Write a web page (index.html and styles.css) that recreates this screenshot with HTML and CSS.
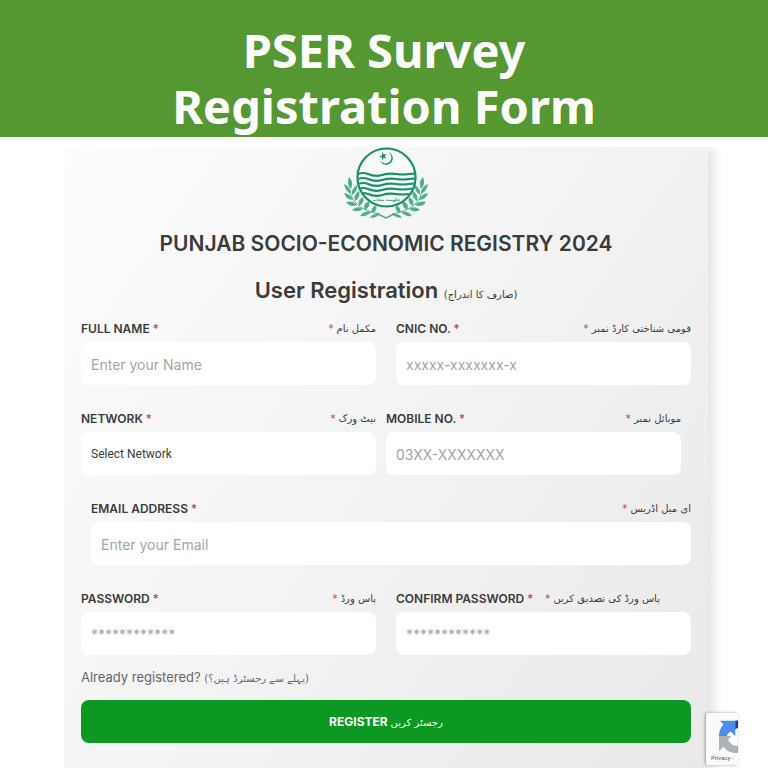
FILE: index.html
```html
<!DOCTYPE html>
<html lang="en">
<head>
<meta charset="utf-8">
<meta name="viewport" content="width=device-width, initial-scale=1">
<title>PSER Survey Registration Form</title>
<link rel="stylesheet" href="styles.css">
</head>
<body>
<header class="banner">
  <h1>PSER Survey<br>Registration Form</h1>
</header>
<main class="card">
  <svg class="emblem" viewBox="0 0 86 72" aria-hidden="true">
    <defs>
      <clipPath id="disc"><circle cx="43.5" cy="30.5" r="28"/></clipPath>
      <g id="wreath" fill="#4fae8e">
        <path d="M7 43Q9 62 37 67" fill="none" stroke="#4fae8e" stroke-width="1"/>
        <path d="M6 30Q11 35 8 42Q3 37 6 30Z"/>
        <path d="M1 37Q8 40 8 47Q2 44 1 37Z"/>
        <path d="M14 38Q15 44 9 48Q8 42 14 38Z"/>
        <path d="M1 46Q8 47 10 53Q3 53 1 46Z"/>
        <path d="M16 44Q18 50 12 54Q10 48 16 44Z"/>
        <path d="M3 55Q10 53 14 58Q7 61 3 55Z"/>
        <path d="M20 50Q22 56 16 59Q14 53 20 50Z"/>
        <path d="M9 63Q14 58 20 62Q15 66 9 63Z"/>
        <path d="M26 54Q28 60 22 63Q19 57 26 54Z"/>
        <path d="M17 69Q21 63 28 65Q24 70 17 69Z"/>
        <path d="M33 58Q35 64 29 66Q27 61 33 58Z"/>
        <path d="M27 71Q30 66 37 67Q33 71 27 71Z"/>
        <path d="M35 67L43 71" fill="none" stroke="#4fae8e" stroke-width="1.500"/>
      </g>
    </defs>
    <use href="#wreath"/>
    <use href="#wreath" transform="translate(86 0) scale(-1 1)"/>
    <circle cx="43.5" cy="30.5" r="29" fill="#f9fbfa" stroke="#18906a" stroke-width="2.2"/>
    <path d="M45 5a6.500 6.500 0 1 1-8 8a6 6 0 1 0 8-8Z" fill="#18906a"/>
    <path d="M39.500 5l1.200 2.400 2.800-.5-1.800 2.300 1.500 2.300-2.600-.6-1.500 2.300-.2-2.800-2.700-.8 2.600-1.200Z" fill="#18906a"/>
    <g clip-path="url(#disc)" fill="none" stroke="#18906a" stroke-width="2.200">
      <path d="M10 30Q18 24 25 27T39 28T53 27T66 27T80 28"/>
      <path d="M10 35Q18 29 25 32T39 33T53 32T66 32T80 33"/>
      <path d="M10 40Q18 34 25 37T39 38T53 37T66 37T80 38"/>
      <path d="M10 45Q18 39 25 42T39 43T53 42T66 42T80 43"/>
      <path d="M10 50Q18 44 25 47T39 48T53 47T66 47T80 48"/>
    </g>
    <text class="motto" x="43.500" y="54" text-anchor="middle">حکومت پنجاب</text>
  </svg>
  <h2>PUNJAB SOCIO-ECONOMIC REGISTRY 2024</h2>
  <h3>User Registration <span class="urdu" lang="ur" dir="rtl">(صارف کا اندراج)</span></h3>

  <form>
    <div class="row">
      <div class="field">
        <label for="name"><span>FULL NAME <b>*</b></span><span class="urdu" lang="ur" dir="rtl">مکمل نام <b>*</b></span></label>
        <input id="name" type="text" placeholder="Enter your Name">
      </div>
      <div class="field">
        <label for="cnic"><span>CNIC NO. <b>*</b></span><span class="urdu" lang="ur" dir="rtl">قومی شناختی کارڈ نمبر <b>*</b></span></label>
        <input id="cnic" type="text" placeholder="xxxxx-xxxxxxx-x">
      </div>
    </div>
    <div class="row row-tight">
      <div class="field">
        <label for="network"><span>NETWORK <b>*</b></span><span class="urdu" lang="ur" dir="rtl">نیٹ ورک <b>*</b></span></label>
        <select id="network"><option>Select Network</option></select>
      </div>
      <div class="field">
        <label for="mobile"><span>MOBILE NO. <b>*</b></span><span class="urdu" lang="ur" dir="rtl">موبائل نمبر <b>*</b></span></label>
        <input id="mobile" type="tel" placeholder="03XX-XXXXXXX">
      </div>
    </div>
    <div class="row row-indent">
      <div class="field">
        <label for="email"><span>EMAIL ADDRESS <b>*</b></span><span class="urdu" lang="ur" dir="rtl">ای میل اڈریس <b>*</b></span></label>
        <input id="email" type="email" placeholder="Enter your Email">
      </div>
    </div>
    <div class="row">
      <div class="field">
        <label for="password"><span>PASSWORD <b>*</b></span><span class="urdu" lang="ur" dir="rtl">پاس ورڈ <b>*</b></span></label>
        <input id="password" type="password" placeholder="************">
      </div>
      <div class="field">
        <label class="label-start" for="confirm"><span>CONFIRM PASSWORD <b>*</b></span><span class="urdu" lang="ur" dir="rtl">پاس ورڈ کی تصدیق کریں <b>*</b></span></label>
        <input id="confirm" type="password" placeholder="************">
      </div>
    </div>
    <p class="login"><a href="#">Already registered? <span class="urdu" lang="ur" dir="rtl">(پہلے سے رجسٹرڈ ہیں؟)</span></a></p>
    <button type="submit">REGISTER <span class="urdu" lang="ur" dir="rtl">رجسٹر کریں</span></button>
  </form>
</main>
<aside class="captcha">
  <svg viewBox="0 0 40 40" aria-hidden="true">
    <path d="M0 20A20 20 0 0 1 5 7L1 3H18V20L13 15Q9 17 9 20Z" fill="#4a8cf0"/>
    <path d="M18 3Q32 0 38 10V21L28 11Q22 9 18 13Z" fill="#1c3aa9"/>
    <path d="M0 20H14L10 24Q13 31 20 31Q27 30 30 25L36 31Q29 39 20 39Q10 39 5 32L0 37Z" fill="#b0b1b3"/>
  </svg>
  <a href="#">Privacy -</a>
</aside>
</body>
</html>
```
FILE: styles.css
```css
* {
  box-sizing: border-box;
}

body {
  margin: 0;
  min-height: 100vh;
  display: flex;
  flex-direction: column;
  position: relative;
  background: #fff;
  color: #3b3b3b;
  font-family: Inter, "DejaVu Sans", sans-serif;
}

.banner {
  padding: 22px 16px 3px;
  background: #559831;
  color: #fff;
  text-align: center;
}

h1 {
  margin: 0;
  font: 700 47px/56px "Noto Sans", sans-serif;
}

.card {
  flex: 1;
  margin: 10px 60px 0 64px;
  padding: 0 17px 26px;
  background: linear-gradient(125deg, #fdfdfd, #f3f3f3 50%, #e9e9e9);
  box-shadow: 6px 0 10px #e4e4e4;
  clip-path: inset(0 -20px 0 0);
}

.emblem {
  display: block;
  width: 86px;
  height: 72px;
  margin: 0 auto;
}

.motto {
  font: 700 4px "DejaVu Sans", sans-serif;
  fill: #18906a;
}

h2 {
  margin: 10px 0 0;
  font-size: 21px;
  font-weight: 600;
  line-height: 30px;
  text-align: center;
}

h3 {
  margin: 15px 0 3px;
  font-size: 22px;
  font-weight: 600;
  line-height: 32px;
  text-align: center;
}

.urdu {
  font-family: "DejaVu Sans", sans-serif;
  font-weight: 400;
  font-size: 10px;
}

.row {
  display: flex;
  gap: 20px;
  margin-bottom: 19px;
}

.row-tight {
  gap: 10px;
  padding-right: 10px;
}

.row-indent {
  padding-left: 10px;
}

.field {
  flex: 1;
  min-width: 0;
}

label {
  display: flex;
  justify-content: space-between;
  align-items: center;
  height: 28px;
  font-size: 12px;
  font-weight: 600;
  white-space: nowrap;
}

.label-start {
  justify-content: flex-start;
  gap: 12px;
}

label b {
  color: #b5403c;
  font-weight: 400;
}

input,
select {
  display: block;
  width: 100%;
  height: 43px;
  padding: 2px 10px 0;
  border: 0;
  border-radius: 8px;
  background: #fff;
  color: #3b3b3b;
  font-family: Inter, sans-serif;
  font-size: 14px;
}

select {
  appearance: none;
  padding-top: 0;
  font-family: Roboto, sans-serif;
  font-size: 12px;
}

::placeholder {
  color: #a5a5a5;
  opacity: 1;
}

.login {
  margin: -7px 0 11px;
  font-size: 13px;
  line-height: 20px;
}

.login a {
  color: #666;
  text-decoration: none;
}

button {
  display: block;
  width: 100%;
  height: 43px;
  border: 0;
  border-radius: 8px;
  background: #0c9822;
  color: #fff;
  font: 700 12px Inter, sans-serif;
}

.captcha {
  position: absolute;
  right: 30px;
  bottom: 4px;
  width: 32px;
  height: 52px;
  padding: 5px 0 0 5px;
  overflow: hidden;
  border-radius: 2px 0 0 2px;
  background: #fafafa;
  box-shadow: -1px 0 3px #999;
}

.captcha svg {
  display: block;
  width: 36px;
  height: 36px;
  margin-left: 8px;
}

.captcha a {
  display: block;
  color: #555;
  font: 6px/8px Roboto, sans-serif;
  text-decoration: none;
  white-space: nowrap;
}
```
